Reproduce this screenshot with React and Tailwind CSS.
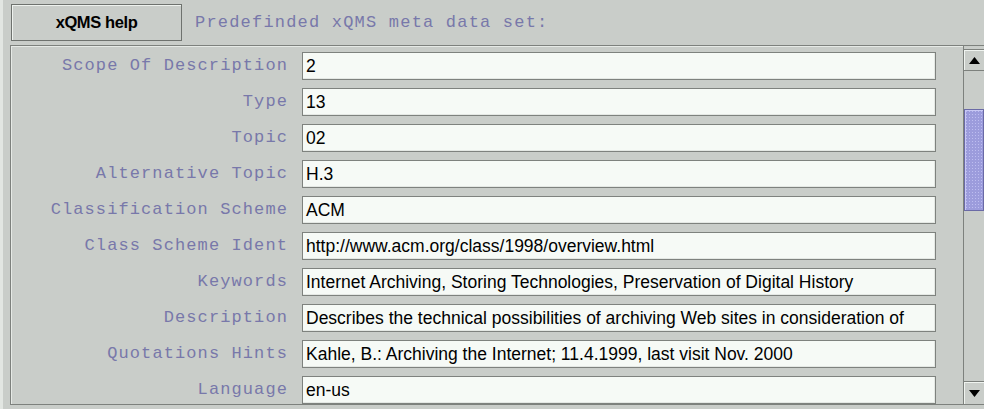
import React from 'react';

const fields = [
  ['Scope Of Description', '2'],
  ['Type', '13'],
  ['Topic', '02'],
  ['Alternative Topic', 'H.3'],
  ['Classification Scheme', 'ACM'],
  ['Class Scheme Ident', 'http://www.acm.org/class/1998/overview.html'],
  ['Keywords', 'Internet Archiving, Storing Technologies, Preservation of Digital History'],
  ['Description', 'Describes the technical possibilities of archiving Web sites in consideration of'],
  ['Quotations Hints', 'Kahle, B.: Archiving the Internet; 11.4.1999, last visit Nov. 2000'],
  ['Language', 'en-us'],
];

const mono = { fontFamily: '"Liberation Mono", "DejaVu Sans Mono", monospace' };
const sans = { fontFamily: '"Liberation Sans", Arial, sans-serif' };

const Arrow = ({ up }) => (
  <svg width="11" height="7" viewBox="0 0 11 7">
    {up ? <polygon points="5.5,0 11,7 0,7" fill="#000" /> : <polygon points="0,0 11,0 5.5,7" fill="#000" />}
  </svg>
);

const Row = ({ label, value }) => (
  <div className="flex items-center h-[28px]">
    <div className="w-[277px] text-right text-[17px] tracking-[1.1px] text-[#7878aa] whitespace-nowrap" style={mono}>
      {label}
    </div>
    <div className="ml-[14px] w-[634px] h-[28px] flex items-center bg-[#f6faf6] border border-[#7e827e] shadow-[inset_-1px_-1px_0_#e4e8e4] px-[3px] overflow-hidden">
      <span className="text-[17.5px] text-black whitespace-nowrap" style={sans}>
        {value}
      </span>
    </div>
  </div>
);

export default function App() {
  return (
    <div className="w-[984px] h-[409px] bg-[#c9cdc9] overflow-hidden border-l-[3px] border-[#e2e6e2]">
      {/* top bar */}
      <div className="flex items-center h-[45px]">
        <button
          type="button"
          className="ml-[8px] w-[171px] h-[37px] border border-[#6e726e] shadow-[inset_1px_1px_0_#eef2ee] bg-[#c9cdc9] text-[16.5px] font-bold tracking-[-0.4px] text-black"
          style={sans}
        >
          xQMS help
        </button>
        <span className="ml-[13px] text-[17px] tracking-[1.2px] text-[#7878aa] whitespace-nowrap" style={mono}>
          Predefinded xQMS meta data set:
        </span>
      </div>

      {/* form panel */}
      <div className="ml-[7px] h-[360px] flex border-t border-l border-b border-[#7d817d] shadow-[inset_1px_1px_0_#e6eae6]">
        <div className="flex-1 flex flex-col gap-[8px] pt-[6px]">
          {fields.map(([label, value]) => (
            <Row key={label} label={label} value={value} />
          ))}
        </div>

        {/* scrollbar */}
        <div className="w-[21px] flex flex-col border-l border-[#7d817d] bg-[#c9cdc9]">
          <div className="mt-[3px] h-[22px] flex items-center justify-center border-t border-b border-[#7d817d] shadow-[inset_1px_1px_0_#f0f4f0]">
            <Arrow up />
          </div>
          <div className="flex-1 flex flex-col">
            <div className="h-[38px]" />
            <div className="h-[102px] border border-[#6a6aa6] bg-[#9c9cdc] bg-[radial-gradient(#bdbdf0_1px,transparent_1px)] bg-[length:3px_3px] shadow-[inset_1px_1px_0_#c8c8f4]" />
            <div className="flex-1" />
          </div>
          <div className="h-[23px] flex items-center justify-center border-t border-[#7d817d] shadow-[inset_1px_1px_0_#f0f4f0]">
            <Arrow />
          </div>
        </div>
      </div>
    </div>
  );
}
